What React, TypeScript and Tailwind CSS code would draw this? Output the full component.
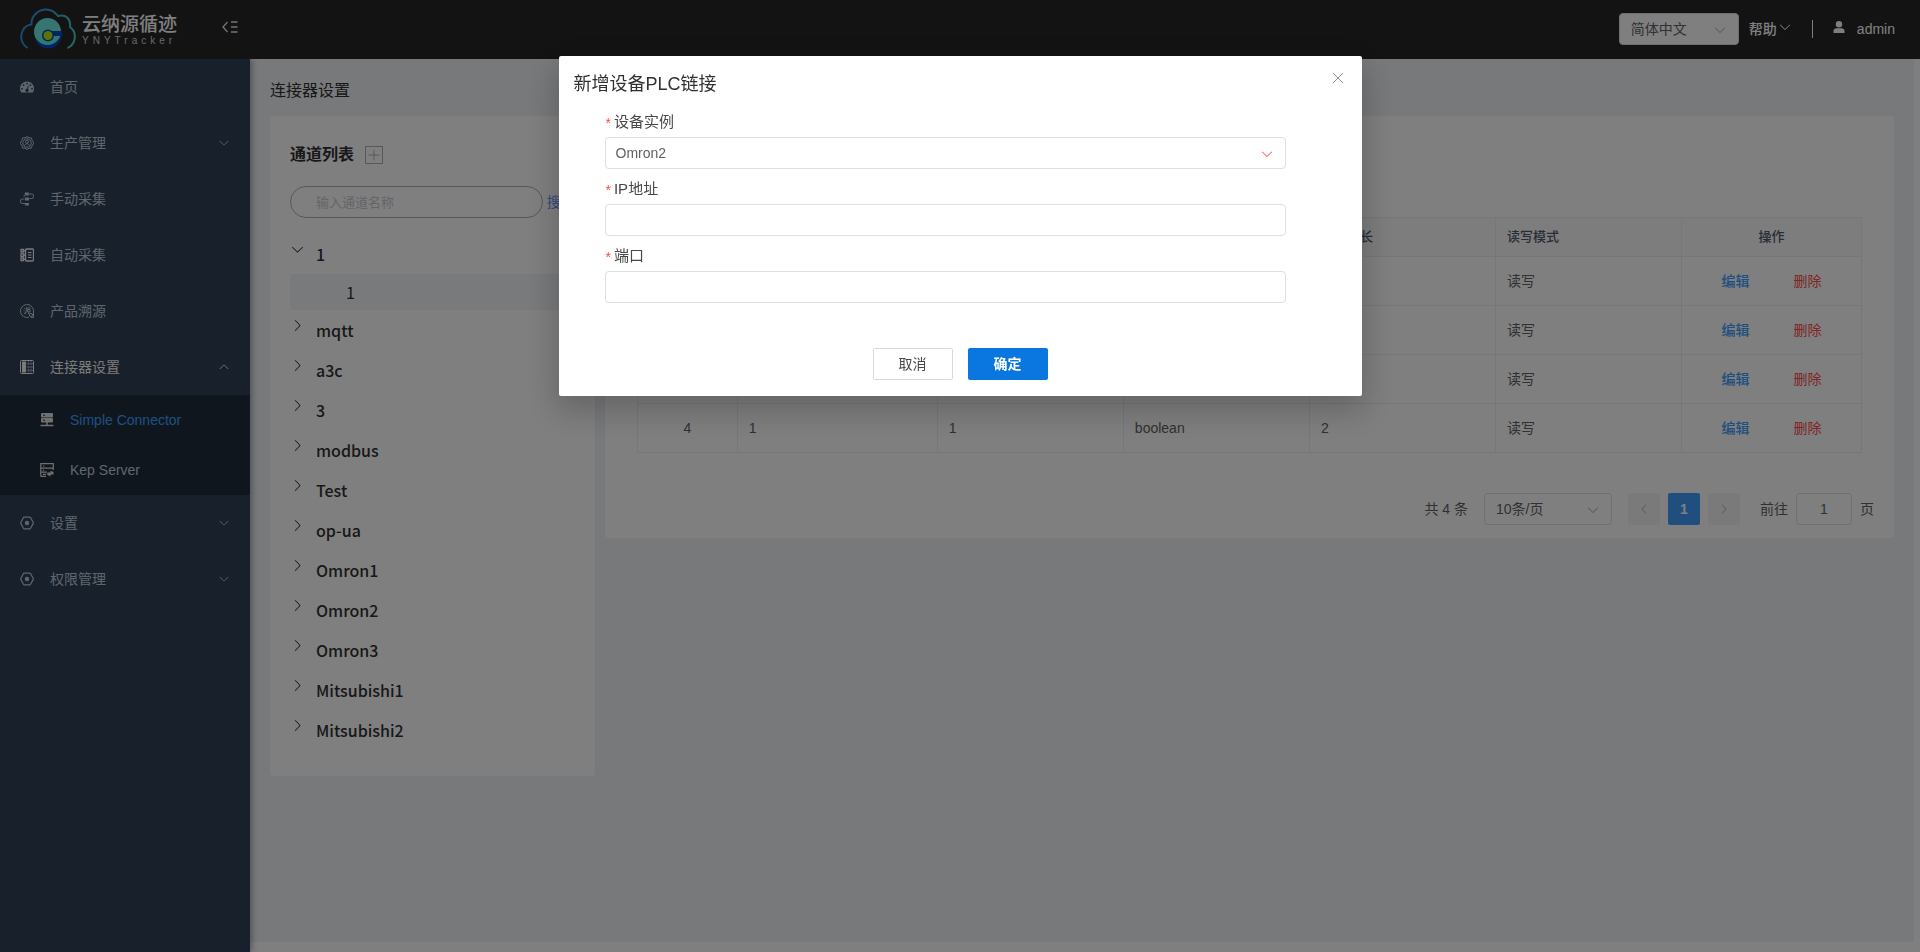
import type { ReactNode } from "react";

const channels = [
  "mqtt",
  "a3c",
  "3",
  "modbus",
  "Test",
  "op-ua",
  "Omron1",
  "Omron2",
  "Omron3",
  "Mitsubishi1",
  "Mitsubishi2",
];

const rows = [
  { id: 1, name: "1", address: "1", type: "boolean", length: 2 },
  { id: 2, name: "1", address: "1", type: "boolean", length: 2 },
  { id: 3, name: "1", address: "1", type: "boolean", length: 2 },
  { id: 4, name: "1", address: "1", type: "boolean", length: 2 },
];

const rotations = {
  down: "",
  up: "rotate-180",
  left: "rotate-90",
  right: "-rotate-90",
};

const Chevron = ({
  direction = "down",
  className = "size-3",
}: {
  direction?: keyof typeof rotations;
  className?: string;
}) => (
  <svg
    viewBox="0 0 1024 1024"
    fill="currentColor"
    className={`shrink-0 ${rotations[direction]} ${className}`}
  >
    <path d="M831.872 340.864 512 652.672 192.128 340.864a30.592 30.592 0 0 0-42.752 0 29.12 29.12 0 0 0 0 41.6L489.664 714.24a32 32 0 0 0 44.672 0l340.288-331.712a29.12 29.12 0 0 0 0-41.728 30.592 30.592 0 0 0-42.752 0z" />
  </svg>
);

const MenuIcon = ({ children }: { children: ReactNode }) => (
  <svg
    viewBox="0 0 14 14"
    fill="none"
    stroke="currentColor"
    className="size-[14px] shrink-0"
  >
    {children}
  </svg>
);

const DashboardIcon = () => (
  <MenuIcon>
    <path
      fill="currentColor"
      stroke="none"
      fillRule="evenodd"
      d="M7 1.5a7 7 0 0 0-7 7c0 1.4.4 2.7 1 3.8.1.1.3.2.5.2h11c.2 0 .4-.1.5-.2.6-1.1 1-2.4 1-3.8a7 7 0 0 0-7-7zM2 7.8a.9.9 0 1 1 0 1.800.9.9 0 0 1 0-1.8zM3.600 4.300a.9.9 0 1 1 0 1.800.9.9 0 0 1 0-1.8zM7 2.700a.9.9 0 1 1 0 1.800.9.9 0 0 1 0-1.8zM10.400 4.300a.9.9 0 1 1 0 1.800.9.9 0 0 1 0-1.8zM12 7.800a.9.9 0 1 1 0 1.800.9.9 0 0 1 0-1.8zM8 5.500l.8.2-.8 3.200a1.700 1.700 0 1 1-.9-.3z"
    />
  </MenuIcon>
);

const ProductionIcon = () => (
  <MenuIcon>
    <path d="M7 .6 9 1.800l2.400.1.600 2.300L13.400 6.200v1.600L12 9.800l-.6 2.300-2.400.1L7 13.400l-2-1.200-2.400-.1L2 9.800.6 7.800V6.200L2 4.200l.6-2.300L5 1.800z" />
    <circle cx="7" cy="7" r="4.200" />
    <circle cx="7" cy="5.800" r="1.500" />
    <path d="M4.600 9.700c.5-2.600 4.300-2.600 4.800 0" />
  </MenuIcon>
);

const ManualIcon = () => (
  <MenuIcon>
    <path d="M8.500 2h3a2 2 0 0 1 0 4.500H9.500M4.500 7h-2a2.200 2.200 0 0 0 0 4.500h3" />
    <path
      fill="currentColor"
      stroke="none"
      d="M4.800.5h4v3h-4zM5 5.500h4v3H5zM5 11h4v2.600H5zM3.500 3.500h1.500v1H3.500z"
    />
  </MenuIcon>
);

const AutoIcon = () => (
  <MenuIcon>
    <g stroke="#f4f4f5">
      <rect x="5.500" y="1" width="8" height="12" rx="1" strokeWidth="1.300" />
      <path d="M8 4.500h3.500M8 7h3.500M8 9.500h3.500" />
      <path
        strokeWidth="1.300"
        d="M1 1.500h2.500v2.500H1zM1 5.800h2.500v2.500H1zM1 10h2.500v2.500H1zM3.500 2.800h2M3.500 7h2M3.500 11.300h2"
      />
    </g>
  </MenuIcon>
);

const TraceIcon = () => (
  <MenuIcon>
    <path d="M9 13.200A6.500 6.500 0 1 1 13.500 7v6.500H11" />
    <path d="M4 4.200l.8.800M3.800 6.500l.8.800M4 10l1-1.500M6 4h4.500M6.200 4v3.500L5.500 10M7.500 5.500h2.500v2.300H7.500zM8.700 8v2.300" />
    <circle cx="11" cy="11" r="1.600" />
  </MenuIcon>
);

const ConnectorIcon = () => (
  <MenuIcon>
    <rect x=".5" y=".5" width="13" height="13" rx="1" />
    <path fill="#f4f4f5" stroke="none" d="M2 1.500h4v11H2z" />
    <g opacity=".6">
      <path d="M6.500 3.700h7M6.500 7h7M6.500 10.300h7" />
      <path d="M8.500 1v12M11 1v12" strokeDasharray="1.500 1" />
    </g>
  </MenuIcon>
);

const SimpleIcon = () => (
  <MenuIcon>
    <rect x="1" y="0" width="12" height="4.400" rx="1" fill="currentColor" stroke="none" />
    <rect x="1" y="5" width="12" height="4.400" rx="1" fill="currentColor" stroke="none" />
    <path d="M3 2.200h2M3 7.200h2" stroke="#1f2d3d" />
    <path d="M7 9v4M.5 12.500h13" strokeWidth="1.500" />
  </MenuIcon>
);

const KepIcon = () => (
  <MenuIcon>
    <path
      strokeWidth="1.200"
      d="M.8 13.500V.7h12.500v4.500H.8M.8 9.200H7M.8 13.300H6M3 3h1.500M3 7.300h1M3 11.300h3M13.200 5v2"
    />
    <path
      fill="currentColor"
      stroke="none"
      d="M7.500 9.500h3V7.800L13.500 9v2.500h-3v2L7 11.500z"
    />
  </MenuIcon>
);

const HexIcon = () => (
  <MenuIcon>
    <path
      strokeWidth="1.200"
      strokeLinejoin="round"
      d="M4.300 1.200h5.400c.4 0 .7.200.9.500l2.500 4.600c.2.400.2.900 0 1.300l-2.500 4.700c-.2.300-.5.500-.9.500H4.300c-.4 0-.7-.2-.9-.5L.9 7.600c-.2-.4-.2-.9 0-1.300l2.500-4.600c.2-.3.500-.5.900-.5z"
    />
    <circle cx="7" cy="7" r="2.200" fill="currentColor" stroke="none" />
  </MenuIcon>
);

const Logo = () => (
  <svg viewBox="0 0 58 42" fill="none" className="h-[42px] w-[58px] shrink-0">
    <defs>
      <linearGradient id="cloud" x1="0" y1="0" x2="1" y2="0">
        <stop offset="0" stopColor="#2f8fd6" />
        <stop offset=".5" stopColor="#3f9ce0" />
        <stop offset="1" stopColor="#43d6c4" />
      </linearGradient>
    </defs>
    <path
      stroke="url(#cloud)"
      strokeWidth="2"
      d="M7.500 40C2 36 .5 31 1.500 26 3 20 7 17 11.500 16.500 11 8 18 2 25 1.500c6-.4 10 2.500 13 6.500 8-2 13 3 12 11 7.500 5.500 6 17-2.500 21"
    />
    <circle cx="28" cy="27" r="13.500" fill="#0048c8" />
    <circle cx="27.500" cy="23.500" r="13.500" fill="#6cecdc" />
    <path fill="#0048c8" d="M28 23h14v5H28z" />
    <circle cx="28" cy="27.500" r="6" fill="#0048c8" />
    <circle cx="28" cy="27.500" r="4.500" fill="#b8e800" />
  </svg>
);

const MenuItem = ({
  icon,
  text,
  arrow,
  active = false,
}: {
  icon: ReactNode;
  text: string;
  arrow?: "up" | "down";
  active?: boolean;
}) => {
  const style = `flex h-14 w-full items-center gap-4 px-5 text-left text-sm ${
    active ? "text-[#f4f4f5]" : "text-[#bfcbd9]"
  }`;

  if (!arrow) {
    return (
      <a href="#" className={style}>
        {icon}
        <span>{text}</span>
      </a>
    );
  }

  return (
    <button type="button" className={style} aria-expanded={arrow === "up"}>
      {icon}
      <span className="flex-1">{text}</span>
      <Chevron direction={arrow} />
    </button>
  );
};

const Sidebar = () => (
  <nav className="z-10 w-[250px] shrink-0 bg-[#304156] shadow-[2px_0_6px_rgba(0,21,41,0.35)]">
    <MenuItem icon={<DashboardIcon />} text="首页" />
    <MenuItem icon={<ProductionIcon />} text="生产管理" arrow="down" />
    <MenuItem icon={<ManualIcon />} text="手动采集" />
    <MenuItem icon={<AutoIcon />} text="自动采集" />
    <MenuItem icon={<TraceIcon />} text="产品溯源" />
    <MenuItem icon={<ConnectorIcon />} text="连接器设置" arrow="up" active />
    <div className="bg-[#1f2d3d] text-sm">
      <a href="#" className="flex h-[50px] items-center gap-4 pl-10 text-[#409eff]">
        <span className="text-[#e0e0e0]">
          <SimpleIcon />
        </span>
        Simple Connector
      </a>
      <a href="#" className="flex h-[50px] items-center gap-4 pl-10 text-[#bfcbd9]">
        <span className="text-[#e0e0e0]">
          <KepIcon />
        </span>
        Kep Server
      </a>
    </div>
    <MenuItem icon={<HexIcon />} text="设置" arrow="down" />
    <MenuItem icon={<HexIcon />} text="权限管理" arrow="down" />
  </nav>
);

const Header = () => (
  <header className="z-20 flex h-[59px] items-center bg-[#262626] pb-[2px] pl-5 pr-[25px] text-sm text-white">
    <Logo />
    <div className="ml-1 flex w-24 flex-col pt-1">
      <span className="text-[19px] font-medium leading-5">云纳源循迹</span>
      <span className="text-[10px] leading-3 tracking-[4px] text-[#d0d0d0]">YNYTracker</span>
    </div>
    <button type="button" aria-label="收起菜单" className="mb-1 ml-11">
      <svg viewBox="0 0 16 12" fill="none" stroke="#e8e8e8" strokeWidth="1.300" className="h-3 w-4">
        <path d="M5.500 1 1 6l4.500 5M9 1h6.500M9 6h6.500M9 11h6.500" />
      </svg>
    </button>

    <div className="ml-auto flex items-center">
      <div className="relative mr-[10px]">
        <select
          aria-label="语言"
          className="h-8 w-[120px] appearance-none rounded border border-[#dcdfe6] bg-white pl-[11px] text-[#606266]"
        >
          <option>简体中文</option>
        </select>
        <Chevron className="pointer-events-none absolute right-3 top-[10px] size-[14px] text-[#a8abb2]" />
      </div>
      <button type="button" className="flex items-center gap-px font-medium">
        帮助
        <Chevron className="mb-1 size-[14px]" />
      </button>
      <span className="mx-5 h-[18px] w-px bg-white" />
      <a href="#" className="flex items-center gap-3">
        <svg viewBox="0 0 12 12" fill="currentColor" className="mb-1 size-3">
          <circle cx="6" cy="3.200" r="3.200" />
          <path d="M.5 12V9.800C.5 8.200 2 7.300 3.500 7.300h5c1.500 0 3 .9 3 2.500V12z" />
        </svg>
        admin
      </a>
    </div>
  </header>
);

const ChannelList = () => (
  <section className="w-1/5 shrink-0 rounded-[4px] bg-white px-5 pb-[26px] pt-[29px]">
    <div className="flex items-center gap-[11px]">
      <h2 className="text-base font-bold leading-5 text-[#303133]">通道列表</h2>
      <button
        type="button"
        aria-label="新增通道"
        className="flex size-[18px] items-center justify-center border border-[#b0b0b0] text-[#b0b0b0]"
      >
        <svg viewBox="0 0 12 12" stroke="currentColor" className="size-3">
          <path d="M6 .5v11M.5 6h11" />
        </svg>
      </button>
    </div>
    <div className="mb-4 mt-[21px] flex items-center gap-1">
      <input
        aria-label="输入通道名称"
        placeholder="输入通道名称"
        className="h-8 min-w-0 flex-1 rounded-full border border-[#b0b0b0] pl-[25px] text-[13px] placeholder:text-[#c8cad0]"
      />
      <button type="button" className="shrink-0 text-sm text-[#6a8cff]">
        搜索
      </button>
    </div>
    <ul className="font-['Noto_Sans_CJK_SC',sans-serif] text-base font-medium text-[#303133]">
      <li>
        <button type="button" className="flex h-10 w-full items-center gap-[11px]">
          <Chevron className="mb-[10px] size-[15px]" />1
        </button>
        <button type="button" className="flex h-9 w-full items-center bg-[#f2f4f7] pl-14 font-normal">
          1
        </button>
      </li>
      {channels.map((name) => (
        <li key={name}>
          <button type="button" className="flex h-10 w-full items-center gap-[11px]">
            <Chevron direction="right" className="mb-[10px] size-[15px]" />
            {name}
          </button>
        </li>
      ))}
    </ul>
  </section>
);

const headCell = "border border-[#ebeef5] px-[11px] text-left font-medium";
const cell = "border border-[#ebeef5] px-[11px]";

const VariableTable = () => (
  <section className="min-w-0 flex-1 self-start rounded-[4px] bg-white pb-[13px] pt-[101px]">
    <div className="px-8">
      <table className="w-full table-fixed border-collapse text-sm text-[#606266]">
        <colgroup>
          <col className="w-[100px]" />
          <col className="w-[200px]" />
          <col />
          <col />
          <col />
          <col />
          <col className="w-[180px]" />
        </colgroup>
        <thead className="bg-[#fafafa] text-[13px] text-[#515a6e]">
          <tr className="h-[39px]">
            <th className={`${headCell} text-center`}>序号</th>
            <th className={headCell}>变量名称</th>
            <th className={headCell}>变量地址</th>
            <th className={headCell}>数据类型</th>
            <th className={headCell}>数据字长</th>
            <th className={headCell}>读写模式</th>
            <th className="border border-[#ebeef5] text-center font-medium">操作</th>
          </tr>
        </thead>
        <tbody>
          {rows.map((row) => (
            <tr key={row.id} className="h-[49px]">
              <td className={`${cell} text-center`}>{row.id}</td>
              <td className={cell}>{row.name}</td>
              <td className={cell}>{row.address}</td>
              <td className={cell}>{row.type}</td>
              <td className={cell}>{row.length}</td>
              <td className={cell}>读写</td>
              <td className={cell}>
                <div className="flex justify-center gap-11">
                  <button type="button" className="font-medium text-[#409eff]">
                    编辑
                  </button>
                  <button type="button" className="text-[#ff4949]">
                    删除
                  </button>
                </div>
              </td>
            </tr>
          ))}
        </tbody>
      </table>
    </div>

    <div className="mt-10 flex items-center justify-end pr-5 text-sm text-[#606266]">
      <span>共 4 条</span>
      <div className="relative ml-4">
        <select
          aria-label="每页条数"
          className="h-8 w-32 appearance-none rounded border border-[#dcdfe6] pl-[11px]"
        >
          <option>10条/页</option>
        </select>
        <Chevron className="pointer-events-none absolute right-3 top-[10px] size-[14px] text-[#a8abb2]" />
      </div>
      <div className="ml-4 flex gap-2">
        <button
          type="button"
          aria-label="上一页"
          className="flex size-8 items-center justify-center rounded-[2px] bg-[#f4f4f5] text-[#a8abb2]"
        >
          <Chevron direction="left" />
        </button>
        <button type="button" className="size-8 rounded-[2px] bg-[#409eff] font-bold text-white">
          1
        </button>
        <button
          type="button"
          aria-label="下一页"
          className="flex size-8 items-center justify-center rounded-[2px] bg-[#f4f4f5] text-[#a8abb2]"
        >
          <Chevron direction="right" />
        </button>
      </div>
      <label className="ml-5 flex items-center gap-2">
        前往
        <input
          defaultValue="1"
          className="h-8 w-14 rounded border border-[#dcdfe6] text-center"
        />
        页
      </label>
    </div>
  </section>
);

const FieldLabel = ({ htmlFor, text }: { htmlFor: string; text: string }) => (
  <label
    htmlFor={htmlFor}
    className="flex h-[30px] items-center gap-[3px] pl-px pt-px text-[15px] text-[#484848]"
  >
    <span className="text-sm text-[#ff4949]">*</span>
    {text}
  </label>
);

const fieldStyle =
  "mb-[5px] block h-8 w-full appearance-none rounded border border-[#dcdfe6] bg-white px-[10px] text-sm text-[#606266]";

const PlcDialog = () => (
  <div className="fixed inset-0 z-50 flex items-start justify-center bg-black/50 pt-14">
    <div
      role="dialog"
      aria-modal="true"
      aria-labelledby="dialog-title"
      className="w-full max-w-[803px] rounded-[2px] bg-white pb-4 shadow-[0_12px_32px_4px_rgba(0,0,0,0.2)]"
    >
      <div className="flex h-[51px] items-center justify-between pl-[15px] pr-4">
        <h2 id="dialog-title" className="pt-1 text-lg text-[#303133]">
          新增设备PLC链接
        </h2>
        <button type="button" aria-label="关闭" className="mb-2 p-[3px] text-[#909399]">
          <svg viewBox="0 0 10 10" stroke="currentColor" className="size-[10px]">
            <path d="m0 0 10 10M10 0 0 10" />
          </svg>
        </button>
      </div>
      <form className="pl-[46px] pr-[76px]">
        <FieldLabel htmlFor="device" text="设备实例" />
        <div className="relative">
          <select id="device" className={fieldStyle}>
            <option>Omron2</option>
          </select>
          <Chevron className="pointer-events-none absolute right-3 top-[10px] size-[14px] text-[#ff4949]" />
        </div>
        <FieldLabel htmlFor="ip" text="IP地址" />
        <input id="ip" className={fieldStyle} />
        <FieldLabel htmlFor="port" text="端口" />
        <input id="port" className={fieldStyle} />
      </form>
      <div className="mt-[45px] flex justify-center gap-[15px] text-sm">
        <button type="button" className="h-8 w-20 rounded-[2px] border border-[#d9d9d9] text-[#484848]">
          取消
        </button>
        <button type="button" className="h-8 w-20 rounded-[2px] bg-[#0a76e0] font-bold text-white">
          确定
        </button>
      </div>
    </div>
  </div>
);

const App = () => (
  <div className="flex min-h-screen flex-col bg-white font-['Liberation_Sans','Noto_Sans_CJK_SC',sans-serif]">
    <Header />
    <div className="flex flex-1">
      <Sidebar />
      <main className="mb-[10px] mr-[6px] min-w-0 flex-1 bg-[#f0f2f5] px-5 pb-5">
        <h1 className="flex h-[57px] items-center pt-[6px] text-base text-[#303133]">连接器设置</h1>
        <div className="flex items-start gap-[10px]">
          <ChannelList />
          <VariableTable />
        </div>
      </main>
    </div>
    <PlcDialog />
  </div>
);

export default App;
